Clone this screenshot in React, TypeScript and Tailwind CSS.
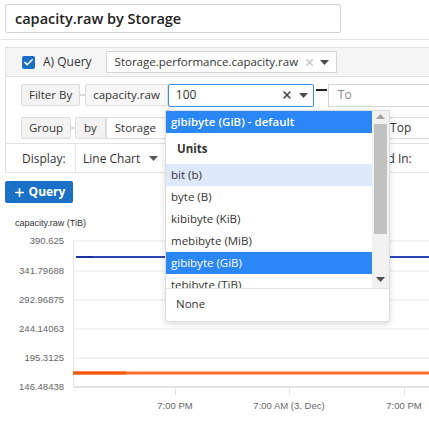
import { Check, Plus, X } from "lucide-react";

const UNITS = [
    { label: "bit (b)", state: "hover" },
    { label: "byte (B)", state: "" },
    { label: "kibibyte (KiB)", state: "" },
    { label: "mebibyte (MiB)", state: "" },
    { label: "gibibyte (GiB)", state: "selected" },
    { label: "tebibyte (TiB)", state: "" },
];

const Caret = ({ className = "" }: { className?: string }) => (
    <svg width="9" height="5" viewBox="0 0 9 5" className={className}>
        <path d="M0 0h9L4.5 5z" fill="currentColor" />
    </svg>
);

const Chip = ({ children, className = "" }: { children: React.ReactNode; className?: string }) => (
    <div
        className={[
            "h-[22px] flex items-center px-[7px] border border-[#dcdcdc] bg-[#f3f3f3] text-[#333] rounded-[2px]",
            className,
        ].join(" ")}
    >
        {children}
    </div>
);

const UnitsDropdown = () => (
    <div className="absolute left-[165px] top-[110px] w-[225px] h-[212px] bg-white border border-[#dedede] rounded-b-[4px] shadow-[0_2px_6px_rgba(0,0,0,0.15)] flex flex-col text-[11.5px]">
        <div className="flex h-[177px]">
            <div className="flex-1 overflow-hidden">
                <div className="h-[22px] flex items-center pl-[5px] bg-[#2b86f6] text-white font-semibold">
                    gibibyte (GiB) - default
                </div>
                <div className="h-[31px] flex items-center pl-[11px] font-bold text-[#333]">Units</div>
                {UNITS.map((u) => (
                    <div
                        key={u.label}
                        className={[
                            "h-[22px] flex items-center pl-[5px]",
                            u.state === "selected"
                                ? "bg-[#2b86f6] text-white"
                                : u.state === "hover"
                                    ? "bg-[#dde9fb] text-[#333]"
                                    : "text-[#333]",
                        ].join(" ")}
                    >
                        {u.label}
                    </div>
                ))}
            </div>
            <div className="w-[17px] bg-[#f1f1f1] flex flex-col items-center">
                <Caret className="text-[#a3a3a3] rotate-180 mt-[3px] shrink-0" />
                <div className="w-[13px] h-[110px] bg-[#c1c1c1] mt-[5px]" />
                <div className="flex-1" />
                <Caret className="text-[#505050] mb-[6px] shrink-0" />
            </div>
        </div>
        <div className="border-t border-[#e2e2e2] flex-1 flex items-center pl-[10px] pb-[3px] text-[#333]">None</div>
    </div>
);

const Chart = () => {
    const grid = [240, 270, 299, 328, 357];
    const labels = ["390.625", "341.79688", "292.96875", "244.14063", "195.3125", "146.48438"];
    const ys = [240, 270, 299, 328, 357, 386];
    return (
        <svg width="429" height="221" viewBox="0 210 429 221" className="block">
            <text x="15" y="225" fontSize="9" fill="#333" fontFamily="Liberation Sans, Arial, sans-serif">
                capacity.raw (TiB)
            </text>
            {grid.map((y) => (
                <line key={y} x1="73" x2="429" y1={y} y2={y} stroke="#e6e6e6" strokeWidth="1" />
            ))}
            <line x1="73.5" x2="73.5" y1="240" y2="386" stroke="#e6e6e6" />
            <line x1="73" x2="429" y1="386" y2="386" stroke="#e3e3e3" strokeWidth="2" />
            {[175, 289, 404].map((x) => (
                <line key={x} x1={x + 0.5} x2={x + 0.5} y1="386" y2="394" stroke="#e3e3e3" />
            ))}
            {labels.map((l, i) => (
                <text
                    key={l}
                    x="64"
                    y={ys[i] + 3}
                    textAnchor="end"
                    fontSize="9.5"
                    fill="#666"
                    fontFamily="Liberation Sans, Arial, sans-serif"
                >
                    {l}
                </text>
            ))}
            <line x1="76" x2="429" y1="256" y2="256" stroke="#2a47b3" strokeWidth="2" />
            <line x1="76" x2="93" y1="256" y2="256" stroke="#1a33a0" strokeWidth="2" />
            <line x1="73" x2="429" y1="372" y2="372" stroke="#ff6b26" strokeWidth="3" />
            <line x1="73" x2="126" y1="372" y2="372" stroke="#f35a10" strokeWidth="3" />
            {[
                { x: 175, t: "7:00 PM" },
                { x: 289, t: "7:00 AM (3. Dec)" },
                { x: 404, t: "7:00 PM" },
            ].map((l, i) => (
                <text
                    key={i}
                    x={l.x}
                    y="408"
                    textAnchor="middle"
                    fontSize="9.5"
                    fill="#666"
                    fontFamily="Liberation Sans, Arial, sans-serif"
                >
                    {l.t}
                </text>
            ))}
        </svg>
    );
};

const App = () => {
    return (
        <div className="relative w-[429px] h-[431px] overflow-hidden bg-white font-['Open_Sans',sans-serif] text-[11.5px] text-[#333]">
            <div className="pl-[5px] pt-[4px]">
                <div className="w-[336px] h-[29px] border border-[#d0d4da] rounded-[2px] flex items-center pl-[9px] text-[14.5px] font-semibold text-[#222]">
                    capacity.raw by Storage
                </div>
            </div>
            <div className="mt-[6px] border-t border-[#e4e4e4]" />

            <div className="ml-[5px] mt-[7px] w-[440px] h-[126px] border border-[#e2e2e2] bg-white">
                <div className="h-[29px] bg-[#f5f5f5] border-b border-[#e2e2e2] flex items-center">
                    <div className="ml-[16px] w-[13px] h-[13px] rounded-[2px] bg-[#1c6dc4] flex items-center justify-center">
                        <Check size={11} strokeWidth={3.5} className="text-white" />
                    </div>
                    <span className="ml-[8px] text-[12px]">A) Query</span>
                    <div className="ml-[14px] w-[231px] h-[22px] bg-white border border-[#d6d6d6] flex items-center pl-[8px]">
                        <span className="flex-1">Storage.performance.capacity.raw</span>
                        <X size={11} strokeWidth={3} className="text-[#c4c4c4] mr-[5px]" />
                        <Caret className="text-[#4c4c4c] mr-[7px]" />
                    </div>
                </div>

                <div className="h-[36px] flex items-center pl-[15px]">
                    <Chip>Filter By</Chip>
                    <div className="w-[5px] h-[2px] bg-[#dcdcdc]" />
                    <Chip className="bg-[#f7f7f7] px-[6px]">capacity.raw</Chip>
                    <div className="w-[146px] h-[23px] border border-[#3b8cf0] bg-white flex items-center pl-[7px] rounded-[2px]">
                        <span className="flex-1 text-[12px]">100</span>
                        <X size={12} strokeWidth={3.2} className="text-[#444] mr-[6px]" />
                        <Caret className="text-[#4c4c4c] mr-[5px]" />
                    </div>
                    <div className="w-[11px] h-[2px] bg-[#222] ml-[2px] self-start mt-[12px]" />
                    <div className="ml-[1px] w-[110px] h-[23px] border border-[#d6d6d6] bg-white flex items-center pl-[9px] text-[#8a8a8a] text-[12px]">
                        To
                    </div>
                </div>

                <div className="h-[30px] flex items-center pl-[15px]">
                    <Chip>Group</Chip>
                    <div className="w-[4px] h-[2px] bg-[#dcdcdc]" />
                    <Chip className="px-[8px]">by</Chip>
                    <div className="h-[22px] w-[64px] flex items-center px-[8px] border border-[#dcdcdc] bg-white">Storage</div>
                    <div className="ml-[218px] h-[22px] w-[60px] flex items-center pl-[3px] border border-[#dcdcdc] bg-white text-[12px]">
                        Top
                    </div>
                </div>

                <div className="h-[30px] border-t border-[#e2e2e2] flex items-center">
                    <div className="w-[70px] h-full flex items-center pl-[16px] border-r border-[#e2e2e2] text-[12px]">
                        Display:
                    </div>
                    <div className="w-[278px] flex items-center pl-[7px] text-[12px]">
                        Line Chart
                        <Caret className="text-[#555] ml-[9px]" />
                    </div>
                    <div className="h-full flex items-center pl-[5px] border-l border-[#e2e2e2] text-[12px]">
                        Rolled In:
                    </div>
                </div>
            </div>

            <div className="ml-[5px] mt-[8px] w-[68px] h-[22px] bg-[#1a6fc6] rounded-[2px] flex items-center justify-center gap-[3px] text-white font-bold text-[12px]">
                <Plus size={13} strokeWidth={3} />
                Query
            </div>

            <div className="mt-[8px]">
                <Chart />
            </div>

            <UnitsDropdown />
        </div>
    );
};

export default App;
